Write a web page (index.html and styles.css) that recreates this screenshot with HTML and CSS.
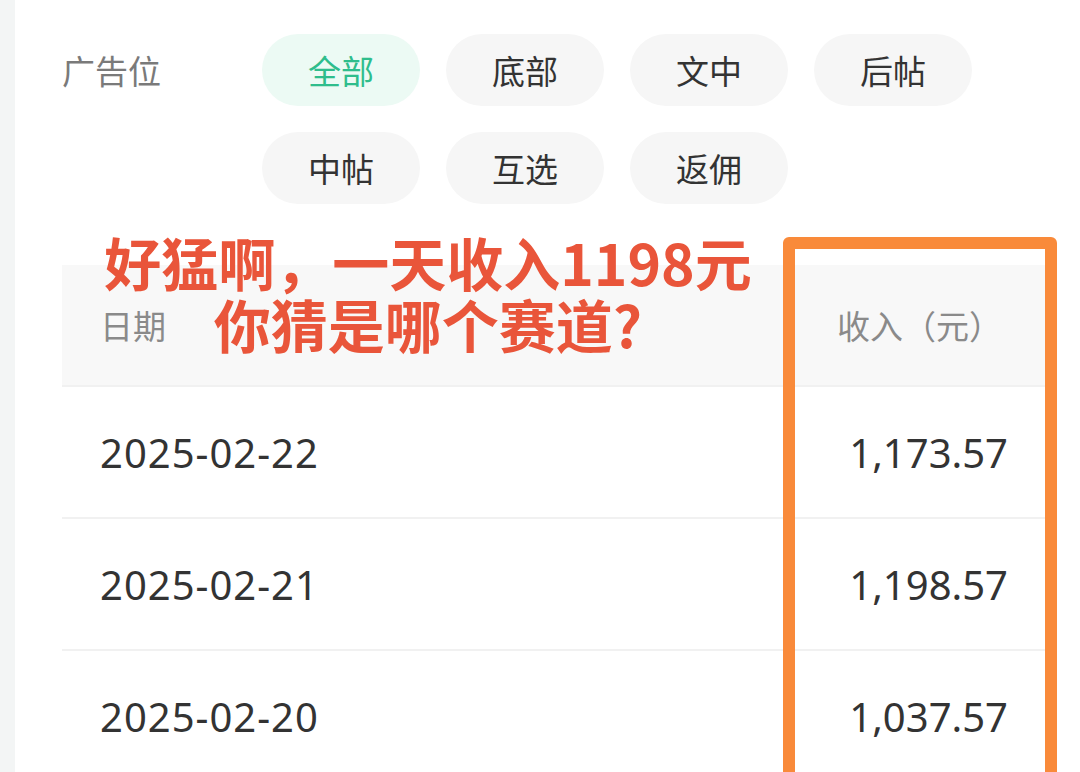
FILE: index.html
```html
<!DOCTYPE html>
<html lang="zh-CN">
<head>
    <meta charset="UTF-8">
    <meta name="viewport" content="width=device-width, initial-scale=1.0">
    <title>收入明细</title>
    <link rel="stylesheet" href="styles.css">
</head>
<body>
    <div class="card">
        <div class="filters">
            <div class="filter-label">广告位</div>
            <div class="chips">
                <span class="chip active">全部</span>
                <span class="chip">底部</span>
                <span class="chip">文中</span>
                <span class="chip">后帖</span>
                <span class="chip">中帖</span>
                <span class="chip">互选</span>
                <span class="chip">返佣</span>
            </div>
        </div>

        <div class="table">
            <div class="table-head">
                <span>日期</span>
                <span class="num">收入（元）</span>
            </div>
            <div class="table-row">
                <span>2025-02-22</span>
                <span class="num">1,173.57</span>
            </div>
            <div class="table-row">
                <span>2025-02-21</span>
                <span class="num">1,198.57</span>
            </div>
            <div class="table-row">
                <span>2025-02-20</span>
                <span class="num">1,037.57</span>
            </div>
        </div>

        <!-- annotation drawn over the screenshot -->
        <div class="caption">好猛啊，一天收入1198元<br>你猜是哪个赛道?</div>
        <div class="highlight"></div>
    </div>
</body>
</html>
```

FILE: styles.css
```css
* {
    margin: 0;
    padding: 0;
    box-sizing: border-box;
}

body {
    font-family: 'Noto Sans', 'Noto Sans CJK SC', sans-serif;
    background: #f3f5f5;
    height: 100vh;
    overflow: hidden;
}

.card {
    position: relative;
    margin-left: 15px;
    height: 100vh;
    background: #fff;
    padding: 34px 35px 0 47px;
    overflow: hidden;
}

.filters {
    display: flex;
}

.filter-label {
    width: 200px;
    line-height: 72px;
    font-size: 33px;
    color: #7a7a7a;
    font-family: 'Noto Sans CJK SC', sans-serif;
}

.chips {
    width: 710px;
    display: flex;
    flex-wrap: wrap;
    gap: 26px;
}

.chip {
    width: 158px;
    height: 72px;
    border-radius: 36px;
    background: #f6f6f6;
    display: flex;
    align-items: center;
    justify-content: center;
    font-family: 'Noto Sans CJK SC', sans-serif;
    font-size: 33px;
    color: #333;
}

.chip.active {
    background: #ecfaf4;
    color: #2fbd8c;
}

.table {
    margin-top: 61px;
}

.table-head,
.table-row {
    display: flex;
    justify-content: space-between;
    align-items: center;
    padding: 0 37px 0 38px;
}

.table-head {
    height: 120px;
    background: #f8f8f8;
    font-family: 'Noto Sans CJK SC', sans-serif;
    font-size: 33px;
    color: #8a8a8a;
}

.table-head .num {
    margin-right: 6px;
}

.table-row {
    height: 132px;
    border-top: 2px solid #f1f1f1;
    font-size: 40px;
    letter-spacing: 1px;
    color: #333;
}

.table-row .num {
    letter-spacing: 0;
}

.table-row:first-of-type {
    border-top: none;
}

.num {
    text-align: right;
}

.caption {
    position: absolute;
    left: 53px;
    top: 230px;
    width: 720px;
    text-align: center;
    font-family: 'Noto Sans CJK SC', sans-serif;
    font-weight: 700;
    font-size: 57px;
    line-height: 62px;
    color: #e9553a;
}

.highlight {
    position: absolute;
    left: 768px;
    top: 237px;
    width: 274px;
    height: 600px;
    border: 12px solid #f98a3a;
    border-radius: 6px;
}
```
